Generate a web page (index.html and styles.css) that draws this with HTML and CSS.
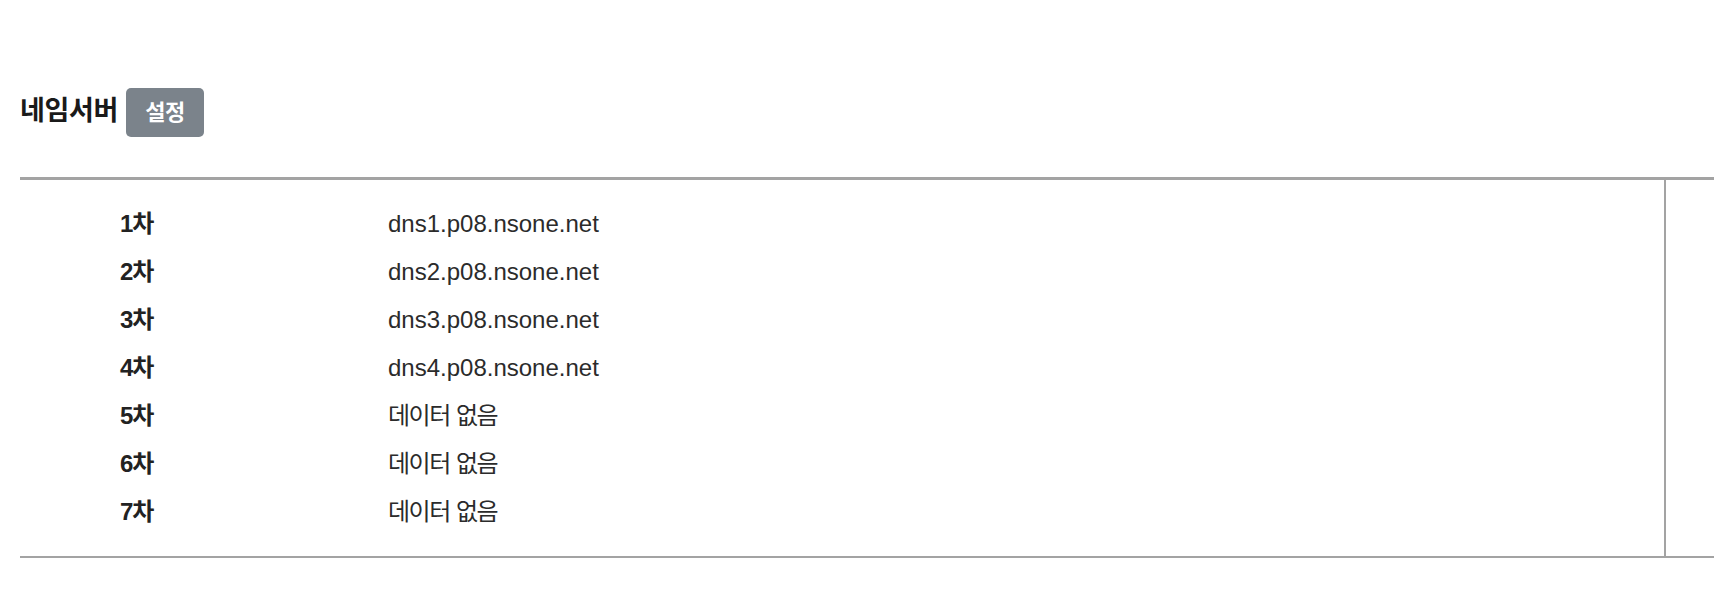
FILE: index.html
```html
<!DOCTYPE html>
<html lang="ko">
<head>
<meta charset="utf-8">
<title>네임서버</title>
<link rel="stylesheet" href="styles.css">
</head>
<body>
<div class="page">
  <div class="heading">
    <h2 class="title">네임서버</h2>
    <button class="btn" type="button">설정</button>
  </div>
  <div class="table-wrap">
    <div class="table">
      <div class="row"><div class="label">1차</div><div class="value">dns1.p08.nsone.net</div></div>
      <div class="row"><div class="label">2차</div><div class="value">dns2.p08.nsone.net</div></div>
      <div class="row"><div class="label">3차</div><div class="value">dns3.p08.nsone.net</div></div>
      <div class="row"><div class="label">4차</div><div class="value">dns4.p08.nsone.net</div></div>
      <div class="row"><div class="label">5차</div><div class="value empty">데이터 없음</div></div>
      <div class="row"><div class="label">6차</div><div class="value empty">데이터 없음</div></div>
      <div class="row"><div class="label">7차</div><div class="value empty">데이터 없음</div></div>
    </div>
  </div>
</div>
</body>
</html>
```

FILE: styles.css
```css
html, body {
  margin: 0;
  padding: 0;
  background: #ffffff;
}

body {
  font-family: "Liberation Sans", "Noto Sans CJK KR", sans-serif;
  color: #333333;
  overflow: hidden;
}

.page {
  padding: 88px 0 0 20px;
}

.heading {
  display: flex;
  align-items: baseline;
  gap: 8px;
  height: 49px;
  margin-bottom: 40px;
}

.title {
  margin: 0;
  font-size: 27px;
  font-weight: 700;
  line-height: 30px;
  color: #1a1a1a;
  letter-spacing: -0.3px;
}

.btn {
  font-family: "Liberation Sans", "Noto Sans CJK KR", sans-serif;
  font-size: 22px;
  font-weight: 700;
  line-height: 31px;
  padding: 9px 19px;
  border: 0;
  border-radius: 5px;
  background: #7b838b;
  color: #ffffff;
  letter-spacing: -0.5px;
}

.table-wrap {
  border-top: 3px solid #a3a3a3;
  border-bottom: 2px solid #a3a3a3;
}

.table {
  width: 1646px;
  box-sizing: border-box;
  border-right: 2px solid #a3a3a3;
  padding: 20px 0;
}

.row {
  display: grid;
  grid-template-columns: 368px 1fr;
  height: 48px;
  line-height: 48px;
  font-size: 24px;
}

.label {
  padding-left: 100px;
  font-weight: 700;
  color: #222222;
  letter-spacing: -1px;
}

.value {
  color: #2b2b2b;
}

.value.empty {
  letter-spacing: -1.5px;
  word-spacing: 1px;
}
```
